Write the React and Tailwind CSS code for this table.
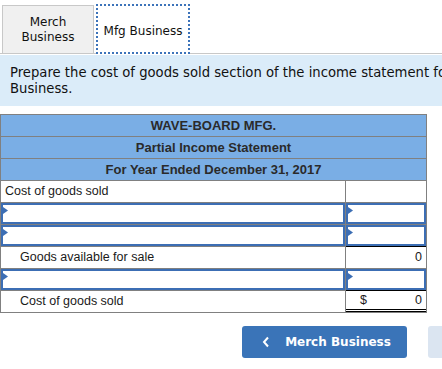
import React from "react";

const verdana = { fontFamily: '"DejaVu Sans", Verdana, sans-serif' };

// little blue arrow in the top-left corner of an entry field
const Marker = () => (
    <svg className="absolute left-0 top-[2px]" width="5" height="7" viewBox="0 0 5 7">
        <polygon points="0,0 5,3.5 0,7" fill="#3c6eb4" />
    </svg>
);

const EntryCell = () => (
    <div className="relative h-full w-full border-2 border-[#3c6eb4] bg-white">
        <Marker />
    </div>
);

const EntryRow = () => (
    <div className="flex h-[22px] border-b border-[#808080]">
        <div className="w-[345px] shrink-0 border-r border-[#808080]">
            <EntryCell />
        </div>
        <div className="flex-1">
            <EntryCell />
        </div>
    </div>
);

const TextRow = ({ label, indent, dollar, value, rightClass = "" }) => (
    <div className="flex h-[22px] border-b border-[#808080]">
        <div
            className={`w-[345px] shrink-0 border-r border-[#808080] flex items-center text-[12.5px] text-[#1a1a1a] ${indent ? "pl-[19px]" : "pl-[4px]"}`}
        >
            {label}
        </div>
        <div className={`flex-1 flex items-center justify-between px-[4px] text-[12.5px] text-[#1a1a1a] ${rightClass}`}>
            <span className="pl-[10px]">{dollar}</span>
            <span>{value}</span>
        </div>
    </div>
);

const App = () => {
    return (
        <div className="w-[442px] h-[369px] overflow-hidden bg-white">
            <div className="w-[640px]">
                {/* Tabs */}
                <div className="flex items-end gap-[2px] pl-[2px] pt-[4px] border-b border-[#c8c8c8]" style={verdana}>
                    <div className="w-[92px] h-[48px] pt-[1px] bg-[#f0f0f0] border border-b-0 border-[#c8c8c8] flex items-center justify-center text-center text-[12px] leading-[15px] text-[#111]">
                        Merch
                        <br />
                        Business
                    </div>
                    <div className="w-[94px] h-[50px] pt-[3px] -mb-px bg-white border-2 border-dotted border-[#3c73ba] flex items-center justify-center text-[12px] text-[#111]">
                        Mfg Business
                    </div>
                </div>

                {/* Instructions */}
                <div className="mt-[1px] bg-[#dbecf9] px-[10px] pt-[10px] pb-[9px] text-[13.2px] leading-[16px] text-[#111] whitespace-nowrap" style={verdana}>
                    Prepare the cost of goods sold section of the income statement for Mfg
                    <br />
                    Business.
                </div>

                {/* Statement */}
                <div
                    className="mt-[8px] w-[427px] border border-b-0 border-[#808080]"
                    style={{ fontFamily: '"Liberation Sans", Arial, sans-serif' }}
                >
                    {["WAVE-BOARD MFG.", "Partial Income Statement", "For Year Ended December 31, 2017"].map((t) => (
                        <div
                            key={t}
                            className="h-[22px] bg-[#7aaee5] border-b border-[#808080] flex items-center justify-center font-bold text-[13px] text-[#2a2a2a]"
                        >
                            {t}
                        </div>
                    ))}
                    <TextRow label="Cost of goods sold" />
                    <EntryRow />
                    <EntryRow />
                    <TextRow label="Goods available for sale" indent value="0" rightClass="border-t border-black -mt-px" />
                    <EntryRow />
                    <TextRow
                        label="Cost of goods sold"
                        indent
                        dollar="$"
                        value="0"
                        rightClass="border-t border-black -mt-px border-b-[3px] border-b-black border-double"
                    />
                </div>

                {/* Navigation */}
                <div className="flex gap-[21px] pl-[242px] mt-[13px]" style={verdana}>
                    <button className="w-[165px] h-[32px] rounded-[3px] bg-[#3a74b8] text-white font-bold text-[12px] flex items-center justify-center gap-[15px] pl-[4px]">
                        <svg width="8" height="12" viewBox="0 0 8 12">
                            <polyline points="6,1.5 2,6 6,10.5" fill="none" stroke="white" strokeWidth="2" />
                        </svg>
                        Merch Business
                    </button>
                    <div className="w-[165px] h-[32px] rounded-[3px] bg-[#dbe5f1]" />
                </div>
            </div>
        </div>
    );
};

export default App;
